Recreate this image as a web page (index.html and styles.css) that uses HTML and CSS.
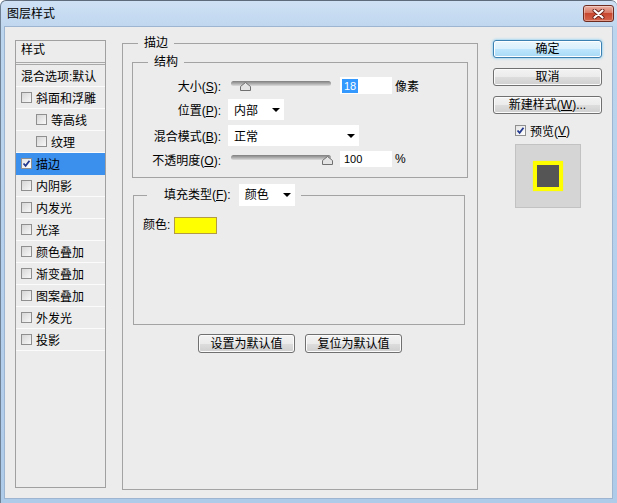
FILE: index.html
```html
<!DOCTYPE html>
<html lang="zh-CN">
<head>
    <meta charset="UTF-8">
    <title>图层样式</title>
    <link rel="stylesheet" href="styles.css">
</head>
<body>
    <div class="window">
        <div class="titlebar">
            <span class="title">图层样式</span>
            <button class="close-btn">
                <svg width="13" height="10" viewBox="0 0 13 10">
                    <path d="M2.5 1.5 L10.5 8.5 M10.5 1.5 L2.5 8.5" stroke="#6b2216" stroke-width="4" stroke-linecap="round"/>
                    <path d="M2.5 1.5 L10.5 8.5 M10.5 1.5 L2.5 8.5" stroke="#fff" stroke-width="2.2" stroke-linecap="round"/>
                </svg>
            </button>
        </div>

        <div class="client">
            <!-- left: style list -->
            <div class="style-list">
                <div class="list-head">样式</div>
                <div class="list-item">混合选项:默认</div>
                <div class="list-item"><span class="check"></span>斜面和浮雕</div>
                <div class="list-item sub"><span class="check"></span>等高线</div>
                <div class="list-item sub"><span class="check"></span>纹理</div>
                <div class="list-item selected"><span class="check on"><svg width="9" height="9" viewBox="0 0 9 9"><path d="M1.5 4.5 L3.6 6.8 L7.5 1.8" fill="none" stroke="#23398f" stroke-width="1.8"/></svg></span>描边</div>
                <div class="list-item"><span class="check"></span>内阴影</div>
                <div class="list-item"><span class="check"></span>内发光</div>
                <div class="list-item"><span class="check"></span>光泽</div>
                <div class="list-item"><span class="check"></span>颜色叠加</div>
                <div class="list-item"><span class="check"></span>渐变叠加</div>
                <div class="list-item"><span class="check"></span>图案叠加</div>
                <div class="list-item"><span class="check"></span>外发光</div>
                <div class="list-item"><span class="check"></span>投影</div>
            </div>

            <!-- middle: stroke settings -->
            <fieldset class="group main-group">
                <legend>描边</legend>

                <fieldset class="group struct-group">
                    <legend>结构</legend>
                    <div class="form-grid">
                        <label>大小(<u>S</u>):</label>
                        <div class="field">
                            <div class="slider">
                                <div class="track"></div>
                                <svg class="thumb" style="left: 9px" width="11" height="9" viewBox="0 0 11 9"><path d="M5.5 0.5 L10.5 4.5 V8.5 H0.5 V4.5 Z" fill="#e4e4e4" stroke="#707070"/></svg>
                            </div>
                            <span class="num"><span class="sel">18</span></span>
                            <span class="unit">像素</span>
                        </div>

                        <label>位置(<u>P</u>):</label>
                        <div class="field">
                            <div class="select pos-select">内部<span class="caret"></span></div>
                        </div>

                        <label>混合模式(<u>B</u>):</label>
                        <div class="field">
                            <div class="select mode-select">正常<span class="caret"></span></div>
                        </div>

                        <label>不透明度(<u>O</u>):</label>
                        <div class="field">
                            <div class="slider">
                                <div class="track"></div>
                                <svg class="thumb" style="left: 91px" width="11" height="9" viewBox="0 0 11 9"><path d="M5.5 0.5 L10.5 4.5 V8.5 H0.5 V4.5 Z" fill="#e4e4e4" stroke="#707070"/></svg>
                            </div>
                            <span class="num">100</span>
                            <span class="unit">%</span>
                        </div>
                    </div>
                </fieldset>

                <fieldset class="group fill-group">
                    <legend>
                        <span class="fill-label">填充类型(<u>F</u>):</span>
                        <div class="select fill-select">颜色<span class="caret"></span></div>
                    </legend>
                    <div class="fill-body">
                        <span>颜色:</span>
                        <span class="swatch"></span>
                    </div>
                </fieldset>

                <div class="btn-row">
                    <button class="btn wide">设置为默认值</button>
                    <button class="btn wide">复位为默认值</button>
                </div>
            </fieldset>

            <!-- right: actions + preview -->
            <div class="actions">
                <button class="btn default">确定</button>
                <button class="btn">取消</button>
                <button class="btn">新建样式(<u>W</u>)...</button>
                <div class="preview-check">
                    <span class="check on"><svg width="9" height="9" viewBox="0 0 9 9"><path d="M1.5 4.5 L3.6 6.8 L7.5 1.8" fill="none" stroke="#23398f" stroke-width="1.8"/></svg></span>预览(<u>V</u>)
                </div>
                <div class="preview">
                    <div class="preview-square"></div>
                </div>
            </div>
        </div>
    </div>
</body>
</html>
```

FILE: styles.css
```css
* {
    box-sizing: border-box;
}

body {
    margin: 0;
    font-family: 'Liberation Sans', 'Noto Sans CJK SC', sans-serif;
    font-size: 12px;
    color: #000;
    background: #fff;
}

u {
    text-decoration: underline;
}

.window {
    width: 617px;
    height: 503px;
    display: flex;
    flex-direction: column;
    background: linear-gradient(#cfe1f4, #bcd5ee 30px, #aecbea);
    border-top: 1px solid #5d6b7b;
    border-left: 1px solid #6f8296;
    border-radius: 6px 6px 0 0;
    overflow: hidden;
}

.titlebar {
    height: 26px;
    display: flex;
    justify-content: space-between;
    align-items: flex-start;
    padding: 0 3px 0 6px;
}

.title {
    margin-top: 6px;
    line-height: 14px;
}

.close-btn {
    margin-top: 4px;
    width: 31px;
    height: 17px;
    padding: 0;
    border: 1px solid #6e2b20;
    border-radius: 3px;
    background: linear-gradient(#eab1a3, #d97a66 45%, #c8472f 50%, #d5664c);
    box-shadow: inset 0 0 0 1px rgba(255, 255, 255, 0.35);
    display: flex;
    justify-content: center;
    align-items: center;
}

.client {
    flex: 1;
    margin: 0 5px 5px 4px;
    padding: 9px 9px 0 10px;
    background: #ececec;
    box-shadow: 0 0 0 1px #9db5d1;
    display: flex;
    align-items: flex-start;
}

/* style list */
.style-list {
    width: 91px;
    height: 448px;
    margin-top: 4px;
    border: 1px solid #a0a0a0;
    background: #ececec;
}

.list-head {
    height: 24px;
    padding: 1px 0 0 5px;
    line-height: 16px;
    border-bottom: 3px double #a8a8a8;
}

.list-item {
    height: 22px;
    display: flex;
    align-items: center;
    padding-left: 5px;
    border-bottom: 1px solid #fbfbfb;
    white-space: nowrap;
}

.list-item.sub {
    padding-left: 20px;
}

.list-item.selected {
    background: #3b90ee;
    border-bottom-color: #3b90ee;
}

.check {
    width: 11px;
    height: 11px;
    margin-right: 4px;
    flex: none;
    border: 1px solid #8f8f8f;
    background: linear-gradient(135deg, #d6d6d6, #f8f8f8);
    display: inline-flex;
    justify-content: center;
    align-items: center;
}

.check.on {
    background: linear-gradient(135deg, #e4e4e4, #ffffff);
}

/* fieldsets */
.group {
    margin: 0;
    padding: 0;
    min-width: 0;
    border: 1px solid #a3a3a3;
}

.group > legend {
    padding: 0 6px;
    margin-left: 15px;
    line-height: 14px;
}

.main-group {
    width: 356px;
    height: 454px;
    margin-left: 16px;
}

.struct-group {
    margin: 5px 9px 0 9px;
}

.form-grid {
    display: grid;
    grid-template-columns: 88px 1fr;
    grid-template-rows: 17px 21px 21px 16px;
    column-gap: 7px;
    row-gap: 5px;
    align-items: center;
    padding: 8px 0 10px 0;
}

.form-grid label {
    text-align: right;
    white-space: nowrap;
}

.field {
    display: flex;
    align-items: center;
    height: 100%;
}

.slider {
    position: relative;
    width: 100px;
    height: 100%;
    margin-left: 3px;
}

.track {
    margin-top: 4px;
    height: 5px;
    border-radius: 3px;
    background: linear-gradient(#7e7e7e, #b4b4b4 60%, #dcdcdc);
}

.thumb {
    position: absolute;
    top: 5px;
}

.num {
    width: 52px;
    height: 100%;
    margin-left: 9px;
    padding-left: 4px;
    background: #fff;
    font-size: 11px;
    display: flex;
    align-items: center;
}

.sel {
    background: #3399ff;
    color: #fff;
    padding: 0 2px;
    margin-left: -2px;
    line-height: 14px;
}

.unit {
    margin-left: 3px;
}

.select {
    height: 21px;
    background: #fff;
    display: flex;
    align-items: center;
    justify-content: space-between;
    padding: 0 4px 0 6px;
}

.caret {
    width: 0;
    height: 0;
    border-top: 4px solid #000;
    border-left: 4px solid transparent;
    border-right: 4px solid transparent;
}

.pos-select {
    width: 56px;
}

.mode-select {
    width: 131px;
}

/* fill */
.fill-group {
    margin: 6px 12px 0 10px;
}

.fill-group > legend {
    margin-left: 13px;
    padding: 0 6px 0 17px;
    display: flex;
    align-items: center;
    line-height: 22px;
}

.fill-select {
    width: 56px;
    height: 22px;
    margin-left: 8px;
}

.fill-body {
    display: flex;
    align-items: center;
    padding: 11px 0 90px 9px;
    line-height: 17px;
}

.swatch {
    width: 43px;
    height: 17px;
    margin-left: 4px;
    background: #ffff00;
    border: 1px solid #b39a45;
}

/* buttons */
.btn {
    font: inherit;
    color: #000;
    height: 18px;
    padding: 0;
    border: 1px solid #707070;
    border-radius: 3px;
    background: linear-gradient(#f3f3f3, #ebebeb 50%, #dddddd 51%, #cfcfcf);
    box-shadow: inset 0 0 0 1px #fbfbfb;
    line-height: 14px;
}

.btn.default {
    border-color: #3c7fb1;
    background: linear-gradient(#eaf6fd, #d9f0fc 50%, #bee6fd 51%, #a7d9f5);
    box-shadow: inset 0 0 0 1px #fff, 0 0 3px #5fc4f6;
}

.btn-row {
    display: flex;
    justify-content: center;
    gap: 10px;
    margin-top: 9px;
}

.btn.wide {
    width: 97px;
    height: 19px;
}

.actions {
    width: 109px;
    margin: 4px 0 0 15px;
    display: flex;
    flex-direction: column;
    gap: 10px;
}

.preview-check {
    display: flex;
    align-items: center;
    height: 13px;
    padding-left: 22px;
}

.preview {
    width: 66px;
    height: 64px;
    margin: -3px 0 0 22px;
    background: #d5d5d5;
    border: 1px solid #c2c2c2;
    display: flex;
    justify-content: center;
    align-items: center;
}

.preview-square {
    width: 30px;
    height: 30px;
    border: 4px solid #ffff00;
    background: #555555;
    box-shadow: 0 0 1px #e8e84a;
}
```
